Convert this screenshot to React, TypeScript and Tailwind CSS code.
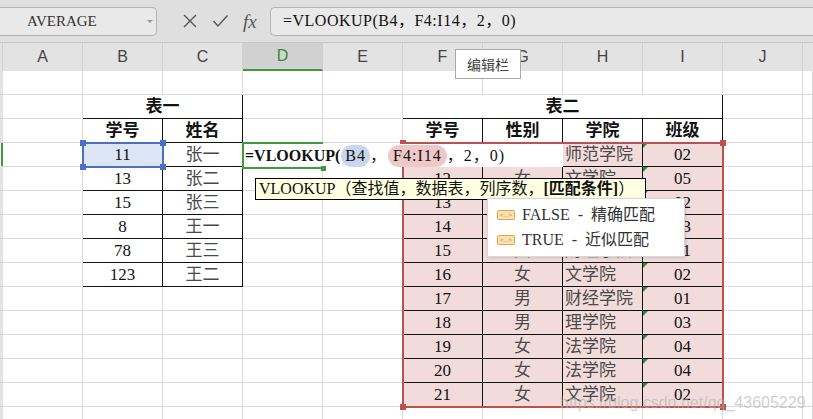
import React from 'react';

type Cell = { text: string; span?: number; bold?: boolean; left?: boolean; cjk?: boolean; flag?: boolean };

const cols = ['A', 'B', 'C', 'D', 'E', 'F', 'G', 'H', 'I', 'J'];

const table1: Cell[][] = [
  [{ text: '表一', span: 2, bold: true }],
  [{ text: '学号', bold: true }, { text: '姓名', bold: true }],
  ...[
    ['11', '张一'],
    ['13', '张二'],
    ['15', '张三'],
    ['8', '王一'],
    ['78', '王三'],
    ['123', '王二'],
  ].map(([a, b]) => [{ text: a }, { text: b, cjk: true }]),
];

const table2Data = [
  ['11', '男', '师范学院', '02'],
  ['12', '女', '文学院', '05'],
  ['13', '男', '理学院', '02'],
  ['14', '女', '法学院', '03'],
  ['15', '女', '财经学院', '01'],
  ['16', '女', '文学院', '02'],
  ['17', '男', '财经学院', '01'],
  ['18', '男', '理学院', '03'],
  ['19', '女', '法学院', '04'],
  ['20', '女', '法学院', '04'],
  ['21', '女', '文学院', '02'],
];

const table2: Cell[][] = [
  [{ text: '表二', span: 4, bold: true }],
  ['学号', '性别', '学院', '班级'].map((t) => ({ text: t, bold: true })),
  ...table2Data.map(([a, b, c, d]) => [
    { text: a },
    { text: b, cjk: true },
    { text: c, cjk: true, left: true },
    { text: d, flag: true },
  ]),
];

// body grid holes (row, col) outside of the two tables
const holes: { r: number; c: number }[] = [];
for (let r = 1; r <= 15; r++) {
  for (let c = 1; c <= 12; c++) {
    const inT1 = c >= 3 && c <= 4 && r >= 2 && r <= 9;
    const inT2 = c >= 7 && c <= 10 && r >= 2 && r <= 14;
    if (!inT1 && !inT2) holes.push({ r, c });
  }
}

const TableBlock = ({ rows, pinkFrom, cls, gridCls }: { rows: Cell[][]; pinkFrom?: number; cls: string; gridCls: string }) => (
  <div className={`${cls} -ml-px -mt-px border-l border-t border-black bg-white`}>
    <div className={`grid ${gridCls} auto-rows-[24px]`}>
      {rows.map((row, ri) =>
        row.map((cell, ci) => (
          <div
            key={`${ri}-${ci}`}
            className={`relative flex items-center border-r border-b border-[#111] leading-none ${
              cell.span === 2 ? 'col-span-2' : cell.span === 4 ? 'col-span-4' : ''
            } ${cell.left ? 'justify-start pl-[2px]' : 'justify-center'} ${
              cell.bold ? 'font-bold text-[17px] text-[#111]' : cell.cjk ? 'text-[17px] text-[#4a4a4a]' : 'text-[17px] text-[#111]'
            } ${pinkFrom !== undefined && ri >= pinkFrom ? 'bg-[#f2dcdb]' : ''} ${
              ri === 2 && ci === 0 && pinkFrom === undefined ? 'bg-[#dce5f4]' : ''
            }`}
          >
            {cell.flag && (
              <span className="absolute left-0 top-0 h-0 w-0 border-t-[5px] border-r-[5px] border-t-[#2f8f2f] border-r-transparent" />
            )}
            {cell.text}
          </div>
        ))
      )}
    </div>
  </div>
);

const Handle = ({ cls }: { cls: string }) => <span className={`absolute h-[6px] w-[6px] ${cls}`} />;

const FnIcon = () => (
  <svg width="18" height="10" viewBox="0 0 18 10">
    <rect x="0.5" y="0.5" width="17" height="9" rx="1" fill="#fbe1b2" stroke="#e2a548" />
    <text x="9" y="7.2" fontSize="6" textAnchor="middle" fill="#b9772a" fontFamily="Liberation Sans, sans-serif">
      {'<...>'}
    </text>
  </svg>
);

export default function App() {
  return (
    <div className="relative h-[419px] w-[813px] overflow-hidden bg-white font-['Liberation_Serif','Noto_Sans_CJK_SC',serif]">
      {/* formula toolbar */}
      <div className="flex h-[43px] items-center bg-[#dfdfdf] border-b border-[#c9c9c9]">
        <div className="relative flex h-[29px] w-[157px] items-center rounded-r-[5px] border border-l-0 border-[#b4b4b4] bg-[#e9e9e9] pl-[27px] text-[15px] text-[#333]">
          AVERAGE
          <span className="absolute right-[3px] top-[12px] h-0 w-0 border-x-[3px] border-t-[3px] border-x-transparent border-t-[#999]" />
        </div>
        <div className="flex w-[113px] items-center pl-[25px] gap-[14px] text-[#555]">
          <svg width="16" height="16" viewBox="0 0 16 16">
            <path d="M2 2 L14 14 M14 2 L2 14" stroke="#555" strokeWidth="1.4" fill="none" />
          </svg>
          <svg width="17" height="14" viewBox="0 0 17 14">
            <path d="M1.5 7 L6 12 L15.5 1.5" stroke="#555" strokeWidth="1.4" fill="none" />
          </svg>
          <span className="text-[19px] italic leading-none text-[#555]">fx</span>
        </div>
        <div className="flex h-[29px] flex-1 items-center rounded-l-[5px] border border-r-0 border-[#b4b4b4] bg-[#e9e9e9] pl-[12px] text-[16px] tracking-[0.5px] text-[#111]">
          =VLOOKUP(B4，F4:I14，2，0)
        </div>
      </div>

      {/* column headers */}
      <div className="grid h-[28px] grid-cols-[3px_repeat(10,80px)_1fr] bg-[#e3e3e3] font-['Liberation_Sans','Noto_Sans_CJK_SC',sans-serif] text-[16px] text-[#444]">
        <div className="border-r border-[#cfcfcf]" />
        {cols.map((c) => (
          <div
            key={c}
            className={`flex items-center justify-center border-r border-[#d0d0d0] ${
              c === 'D' ? 'bg-[#d1d1d1] border-b-2 border-b-[#3d9b3d] text-[#2f8f2f]' : ''
            }`}
          >
            {c}
          </div>
        ))}
        <div />
      </div>

      {/* body grid */}
      <div className="grid grid-cols-[3px_repeat(10,80px)_1fr] auto-rows-[24px]">
        <TableBlock rows={table1} cls="col-start-3 col-span-2 row-start-2 row-span-8" gridCls="grid-cols-2" />
        <TableBlock rows={table2} pinkFrom={2} cls="col-start-7 col-span-4 row-start-2 row-span-13" gridCls="grid-cols-4" />
        {holes.map(({ r, c }) =>
          c === 1 ? (
            <div
              key={`${r}-${c}`}
              className={`border-b border-[#cfcfcf] ${r === 4 ? 'bg-[#3d9b3d] ml-[1px]' : 'bg-[#e3e3e3]'}`}
            />
          ) : (
            <div key={`${r}-${c}`} className="border-r border-b border-[#dadada]" />
          )
        )}
      </div>

      {/* selected cell B4 */}
      <div className="absolute left-[82px] top-[142px] h-[26px] w-[82px] border-2 border-[#4a6fc4]">
        <Handle cls="-left-[4px] -top-[4px] bg-[#4a6fc4]" />
        <Handle cls="-right-[4px] -top-[4px] bg-[#4a6fc4]" />
        <Handle cls="-left-[4px] -bottom-[4px] bg-[#4a6fc4]" />
        <Handle cls="-right-[4px] -bottom-[4px] bg-[#4a6fc4]" />
      </div>

      {/* referenced range F4:I14 */}
      <div className="absolute left-[402px] top-[142px] h-[266px] w-[322px] border-2 border-[#c0504d]">
        <Handle cls="-left-[4px] -top-[4px] bg-[#c0504d]" />
        <Handle cls="-right-[4px] -top-[4px] bg-[#c0504d]" />
        <Handle cls="-left-[4px] -bottom-[4px] bg-[#c0504d]" />
        <Handle cls="-right-[4px] -bottom-[4px] bg-[#c0504d]" />
      </div>

      {/* in-cell editor */}
      <div className="absolute left-[243px] top-[144px] flex h-[23px] w-[320px] items-center bg-white pl-[2px] text-[16px] leading-none text-[#111]">
        <span className="font-bold">=VLOOKUP(</span>
        <span className="ml-[1px] rounded-full bg-[#c8d7ee] px-[4px] py-[3px] tracking-[1px]">B4</span>
        <span className="mr-[2px]">，</span>
        <span className="rounded-full bg-[#efc9c9] px-[5px] py-[3px] tracking-[1px]">F4:I14</span>
        <span className="tracking-[1px]">，2，0)</span>
      </div>
      <div className="absolute left-[242px] top-[142px] h-[27px] w-[81px] border-l-2 border-t-2 border-b-2 border-[#3d9b3d]">
        <span className="absolute -bottom-[4px] -right-[3px] h-[5px] w-[5px] bg-[#3d9b3d]" />
      </div>

      {/* argument hint */}
      <div className="absolute left-[255px] top-[178px] flex h-[22px] w-[391px] items-center border border-black bg-[#ffffe1] pl-[3px] text-[16px] leading-none text-[#111] whitespace-nowrap">
        VLOOKUP（查找值，数据表，列序数，<span className="font-bold">[匹配条件]</span>）
      </div>

      {/* auto-complete list */}
      <div className="absolute left-[487px] top-[198px] flex h-[59px] w-[198px] flex-col justify-center gap-[9px] border border-[#d6d6d6] bg-white pl-[9px] text-[16px] leading-none text-[#333] shadow-[1px_1px_3px_rgba(0,0,0,0.15)]">
        <div className="flex items-center gap-[7px] whitespace-pre">
          <FnIcon />
          <span>FALSE  -  精确匹配</span>
        </div>
        <div className="flex items-center gap-[7px] whitespace-pre">
          <FnIcon />
          <span>TRUE  -  近似匹配</span>
        </div>
      </div>

      {/* toolbar tooltip */}
      <div className="absolute left-[455px] top-[49px] flex h-[30px] w-[66px] items-center justify-center border border-[#a9a9a9] bg-white font-['Noto_Sans_CJK_SC',sans-serif] text-[14px] text-[#444]">
        编辑栏
      </div>

      {/* watermark */}
      <div className="absolute left-[560px] top-[395px] font-['Liberation_Sans',sans-serif] text-[16px] leading-none text-[rgba(175,175,175,0.6)] whitespace-nowrap">
        https://blog.csdn.net/qq_43605229
      </div>
    </div>
  );
}
